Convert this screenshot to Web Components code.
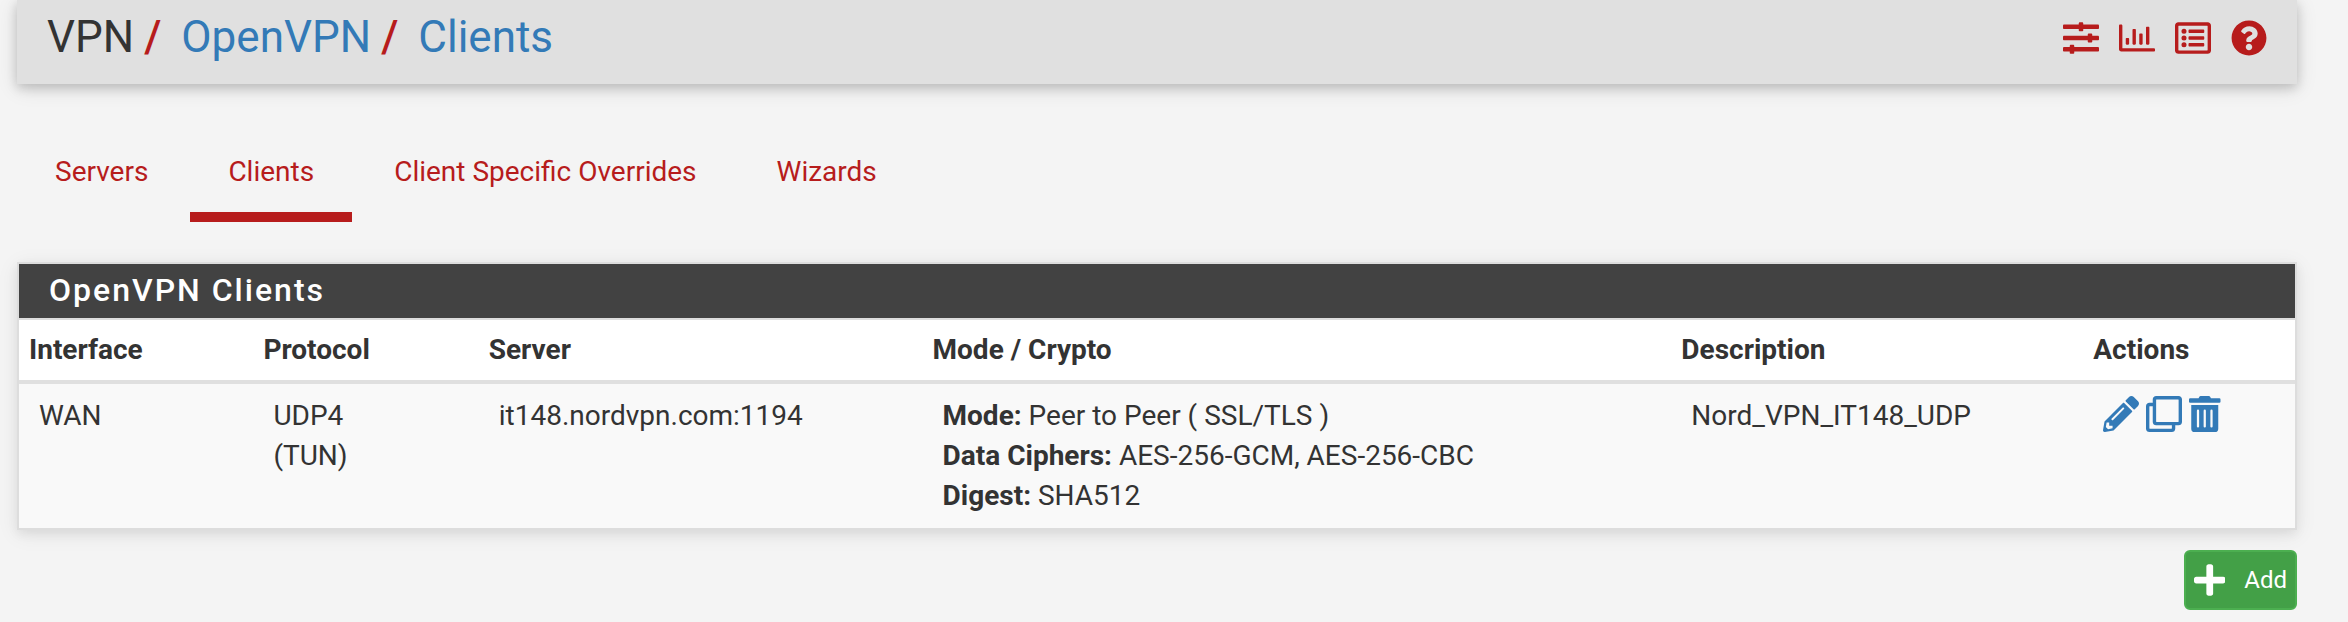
<!DOCTYPE html>
<html lang="en">
<head>
<meta charset="utf-8">
<meta name="viewport" content="width=device-width, initial-scale=1">
<title>VPN: OpenVPN: Clients</title>
<style>
    body {
        margin: 0;
        padding: 0 51px 8px 17px;
        background-color: #f4f4f4;
        color: #333;
        font-family: Roboto, "Liberation Sans", sans-serif;
        font-size: 28px;
        line-height: 40px;
        --red: #b71c1c;
        --blue: #337ab7;
        --line: #ddd;
    }
</style>
</head>
<body>
    <page-header>
        <bread-crumb>VPN</bread-crumb>
        <bread-crumb href="#openvpn">OpenVPN</bread-crumb>
        <bread-crumb href="#clients">Clients</bread-crumb>
        <icon-link slot="icons" icon="sliders" label="Related settings"></icon-link>
        <icon-link slot="icons" icon="chart" label="Related status"></icon-link>
        <icon-link slot="icons" icon="list" label="Related log entries"></icon-link>
        <icon-link slot="icons" icon="question" label="Help"></icon-link>
    </page-header>

    <tab-bar>
        <tab-item href="#servers">Servers</tab-item>
        <tab-item href="#clients" active>Clients</tab-item>
        <tab-item href="#csc">Client Specific Overrides</tab-item>
        <tab-item href="#wizards">Wizards</tab-item>
    </tab-bar>

    <data-panel heading="OpenVPN Clients">
        <client-table></client-table>
    </data-panel>

    <action-bar>
        <add-button>Add</add-button>
    </action-bar>

<script>
const ICONS = {
    sliders: [512, "M496 384H160v-16c0-8.8-7.2-16-16-16h-32c-8.8 0-16 7.2-16 16v16H16c-8.8 0-16 7.2-16 16v32c0 8.8 7.2 16 16 16h80v16c0 8.8 7.2 16 16 16h32c8.8 0 16-7.2 16-16v-16h336c8.8 0 16-7.2 16-16v-32c0-8.8-7.2-16-16-16zm0-160h-80v-16c0-8.8-7.2-16-16-16h-32c-8.8 0-16 7.2-16 16v16H16c-8.8 0-16 7.2-16 16v32c0 8.8 7.2 16 16 16h336v16c0 8.8 7.2 16 16 16h32c8.8 0 16-7.2 16-16v-16h80c8.8 0 16-7.2 16-16v-32c0-8.8-7.2-16-16-16zm0-160H288V48c0-8.8-7.2-16-16-16h-32c-8.8 0-16 7.2-16 16v16H16C7.2 64 0 71.2 0 80v32c0 8.8 7.2 16 16 16h208v16c0 8.8 7.2 16 16 16h32c8.8 0 16-7.2 16-16v-16h208c8.8 0 16-7.2 16-16V80c0-8.8-7.2-16-16-16z"],
    chart: [512, "M396.8 352h22.4c6.4 0 12.8-6.4 12.8-12.8V108.8c0-6.4-6.4-12.8-12.8-12.8h-22.4c-6.4 0-12.8 6.4-12.8 12.8v230.4c0 6.4 6.4 12.8 12.8 12.8zm-192 0h22.4c6.4 0 12.8-6.4 12.8-12.8V140.8c0-6.4-6.4-12.8-12.8-12.8h-22.4c-6.4 0-12.8 6.4-12.8 12.8v198.4c0 6.4 6.4 12.8 12.8 12.8zm96 0h22.4c6.4 0 12.8-6.4 12.8-12.8V204.8c0-6.4-6.4-12.8-12.8-12.8h-22.4c-6.4 0-12.8 6.4-12.8 12.8v134.4c0 6.4 6.4 12.8 12.8 12.8zM496 400H48V80c0-8.8-7.2-16-16-16H16C7.2 64 0 71.2 0 80v336c0 17.7 14.3 32 32 32h464c8.8 0 16-7.2 16-16v-16c0-8.8-7.2-16-16-16zm-387.2-48h22.4c6.4 0 12.8-6.4 12.8-12.8v-70.4c0-6.4-6.4-12.8-12.8-12.8h-22.4c-6.4 0-12.8 6.4-12.8 12.8v70.4c0 6.4 6.4 12.8 12.8 12.8z"],
    list: [512, "M464 32H48C21.5 32 0 53.5 0 80v352c0 26.5 21.5 48 48 48h416c26.5 0 48-21.5 48-48V80c0-26.5-21.5-48-48-48zm-6 400H54a6 6 0 0 1-6-6V86a6 6 0 0 1 6-6h404a6 6 0 0 1 6 6v340a6 6 0 0 1-6 6zM416 340v24a12 12 0 0 1-12 12H204a12 12 0 0 1-12-12v-24a12 12 0 0 1 12-12h200a12 12 0 0 1 12 12zM416 244v24a12 12 0 0 1-12 12H204a12 12 0 0 1-12-12v-24a12 12 0 0 1 12-12h200a12 12 0 0 1 12 12zM416 148v24a12 12 0 0 1-12 12H204a12 12 0 0 1-12-12v-24a12 12 0 0 1 12-12h200a12 12 0 0 1 12 12zM164 160a36 36 0 0 1-72 0a36 36 0 0 1 72 0zM164 256a36 36 0 0 1-72 0a36 36 0 0 1 72 0zM164 352a36 36 0 0 1-72 0a36 36 0 0 1 72 0z"],
    question: [512, "M504 256c0 137-111 248-248 248S8 393 8 256C8 119.1 119 8 256 8s248 111.1 248 248zM262.7 90c-54.5 0-89.3 23-116.6 63.8-3.5 5.3-2.4 12.4 2.7 16.2l34.7 26.3c5.2 4 12.6 3 16.7-2.1 17.9-22.7 30.1-35.8 57.3-35.8 20.4 0 45.7 13.1 45.7 33 0 15-12.4 22.7-32.5 34C247.1 238.5 216 254.9 216 296v4c0 6.6 5.4 12 12 12h56c6.6 0 12-5.4 12-12v-1.3c0-28.5 83.2-29.6 83.2-106.7 0-58-60.2-102-116.5-102zM256 338c-25.4 0-46 20.6-46 46s20.6 46 46 46 46-20.6 46-46-20.6-46-46-46z"],
    pencil: [512, "M497.9 142.1l-46.1 46.1c-4.7 4.7-12.3 4.7-17 0l-111-111c-4.7-4.7-4.7-12.3 0-17l46.1-46.1c18.7-18.7 49.1-18.7 67.9 0l60.1 60.1c18.8 18.7 18.8 49.1 0 67.9zM284.2 99.8L21.6 362.4.4 483.9c-2.9 16.4 11.4 30.6 27.8 27.8l121.5-21.3 262.6-262.6c4.7-4.7 4.7-12.3 0-17l-111-111c-4.8-4.7-12.4-4.7-17.1 0zM124.1 339.9c-5.5-5.5-5.5-14.3 0-19.8l154-154c5.5-5.5 14.3-5.5 19.8 0s5.5 14.3 0 19.8l-154 154c-5.5 5.5-14.3 5.5-19.8 0zM88 424h48v36.3l-64.5 11.3-31.1-31.1L51.7 376H88v48z"],
    clone: [512, "M464 0H144c-26.5 0-48 21.5-48 48v48H48c-26.5 0-48 21.5-48 48v320c0 26.5 21.5 48 48 48h320c26.5 0 48-21.5 48-48v-48h48c26.5 0 48-21.5 48-48V48c0-26.5-21.5-48-48-48zM362 464H54a6 6 0 0 1-6-6V150a6 6 0 0 1 6-6h42v224c0 26.5 21.5 48 48 48h224v42a6 6 0 0 1-6 6zm96-96H150a6 6 0 0 1-6-6V54a6 6 0 0 1 6-6h308a6 6 0 0 1 6 6v308a6 6 0 0 1-6 6z"],
    trash: [448, "M32 464a48 48 0 0 0 48 48h288a48 48 0 0 0 48-48V128H32zm272-256a16 16 0 0 1 32 0v224a16 16 0 0 1-32 0zm-96 0a16 16 0 0 1 32 0v224a16 16 0 0 1-32 0zm-96 0a16 16 0 0 1 32 0v224a16 16 0 0 1-32 0zM432 32H312l-9.4-18.7A24 24 0 0 0 281.1 0H166.8a23.7 23.7 0 0 0-21.4 13.3L136 32H16A16 16 0 0 0 0 48v32a16 16 0 0 0 16 16h416a16 16 0 0 0 16-16V48a16 16 0 0 0-16-16z"],
    plus: [448, "M416 208H272V64c0-17.7-14.3-32-32-32h-32c-17.7 0-32 14.3-32 32v144H32c-17.7 0-32 14.3-32 32v32c0 17.7 14.3 32 32 32h144v144c0 17.7 14.3 32 32 32h32c17.7 0 32-14.3 32-32V304h144c17.7 0 32-14.3 32-32v-32c0-17.7-14.3-32-32-32z"]
};

function iconSvg(name) {
    const [width, path] = ICONS[name];
    return `<svg viewBox="0 0 ${width} 512" height="36" aria-hidden="true"><path fill="currentColor" d="${path}"/></svg>`;
}

class IconLink extends HTMLElement {
    constructor() {
        super();
        this.attachShadow({mode: "open"});
    }

    connectedCallback() {
        this.shadowRoot.innerHTML = `
        <style>
            :host {
                display: block;
            }

            a {
                display: block;
                color: inherit;
            }

            svg {
                display: block;
            }
        </style>
        <a href="#${this.getAttribute("icon")}" aria-label="${this.getAttribute("label")}">${iconSvg(this.getAttribute("icon"))}</a>
        `;
    }
}

class BreadCrumb extends HTMLElement {
    constructor() {
        super();
        this.attachShadow({mode: "open"});
    }

    connectedCallback() {
        const href = this.getAttribute("href");
        this.shadowRoot.innerHTML = `
        <style>
            :host {
                display: flex;
            }

            .separator {
                margin: 0 20px 0 10px;
                color: var(--red);
                font-weight: 500;
            }

            a {
                color: var(--blue);
                text-decoration: none;
            }
        </style>
        ${href ? `<span class="separator">/</span><a href="${href}"><slot></slot></a>` : "<slot></slot>"}
        `;
    }
}

class PageHeader extends HTMLElement {
    constructor() {
        super();
        this.attachShadow({mode: "open"}).innerHTML = `
        <style>
            :host {
                display: block;
            }

            header {
                display: flex;
                justify-content: space-between;
                padding: 11px 30px 21px;
                background-color: #e0e0e0;
                box-shadow: 0 4px 10px rgba(0, 0, 0, 0.16), 0 4px 20px rgba(0, 0, 0, 0.12);
            }

            nav {
                display: flex;
                font-size: 44px;
                line-height: 52px;
            }

            .icons {
                display: flex;
                align-items: flex-start;
                gap: 20px;
                padding-top: 9px;
                color: var(--red);
            }
        </style>
        <header>
            <nav aria-label="Breadcrumb"><slot></slot></nav>
            <div class="icons"><slot name="icons"></slot></div>
        </header>
        `;
    }
}

class TabBar extends HTMLElement {
    constructor() {
        super();
        this.attachShadow({mode: "open"}).innerHTML = `
        <style>
            :host {
                display: block;
                margin: 48px 0 40px;
            }

            nav {
                display: flex;
                flex-wrap: wrap;
                gap: 4px;
            }
        </style>
        <nav aria-label="OpenVPN"><slot></slot></nav>
        `;
    }
}

class TabItem extends HTMLElement {
    constructor() {
        super();
        this.attachShadow({mode: "open"});
    }

    connectedCallback() {
        this.shadowRoot.innerHTML = `
        <style>
            :host {
                display: block;
            }

            a {
                display: block;
                padding: 20px 38px;
                border-bottom: 10px solid transparent;
                color: var(--red);
                text-decoration: none;
            }

            :host([active]) a {
                border-bottom-color: var(--red);
            }
        </style>
        <a href="${this.getAttribute("href")}"><slot></slot></a>
        `;
    }
}

class DataPanel extends HTMLElement {
    constructor() {
        super();
        this.attachShadow({mode: "open"});
    }

    connectedCallback() {
        this.shadowRoot.innerHTML = `
        <style>
            :host {
                display: block;
            }

            section {
                border: 2px solid var(--line);
                background-color: #fff;
                box-shadow: 0 4px 10px rgba(0, 0, 0, 0.06), 0 4px 20px rgba(0, 0, 0, 0.08);
            }

            h2 {
                margin: 0;
                padding: 6px 30px 8px;
                border-bottom: 2px solid var(--line);
                background-color: #424242;
                background-clip: padding-box;
                color: #fff;
                font-size: 32px;
                font-weight: 500;
                letter-spacing: 2px;
            }
        </style>
        <section>
            <h2>${this.getAttribute("heading")}</h2>
            <slot></slot>
        </section>
        `;
    }
}

class ClientTable extends HTMLElement {
    constructor() {
        super();
        this.attachShadow({mode: "open"}).innerHTML = `
        <style>
            :host {
                display: block;
            }

            table {
                width: 100%;
                table-layout: fixed;
                border-collapse: separate;
                border-spacing: 0;
            }

            th {
                padding: 10px;
                border-bottom: 4px solid #e0e0e0;
                text-align: left;
                font-weight: 700;
            }

            td {
                padding: 12px 20px;
                background-color: #f9f9f9;
                vertical-align: top;
            }

            .actions {
                display: flex;
                gap: 7px;
                color: var(--blue);
            }
        </style>
        <table>
            <colgroup>
                <col style="width: 10.3%">
                <col style="width: 9.9%">
                <col style="width: 19.5%">
                <col style="width: 32.9%">
                <col style="width: 18.1%">
                <col>
            </colgroup>
            <thead>
                <tr>
                    <th scope="col">Interface</th>
                    <th scope="col">Protocol</th>
                    <th scope="col">Server</th>
                    <th scope="col">Mode / Crypto</th>
                    <th scope="col">Description</th>
                    <th scope="col">Actions</th>
                </tr>
            </thead>
            <tbody>
                <tr>
                    <td>WAN</td>
                    <td>UDP4<br>(TUN)</td>
                    <td>it148.nordvpn.com:1194</td>
                    <td>
                        <b>Mode:</b> Peer to Peer ( SSL/TLS )<br>
                        <b>Data Ciphers:</b> AES-256-GCM, AES-256-CBC<br>
                        <b>Digest:</b> SHA512
                    </td>
                    <td>Nord_VPN_IT148_UDP</td>
                    <td>
                        <div class="actions">
                            <icon-link icon="pencil" label="Edit client"></icon-link>
                            <icon-link icon="clone" label="Copy client"></icon-link>
                            <icon-link icon="trash" label="Delete client"></icon-link>
                        </div>
                    </td>
                </tr>
            </tbody>
        </table>
        `;
    }
}

class ActionBar extends HTMLElement {
    constructor() {
        super();
        this.attachShadow({mode: "open"}).innerHTML = `
        <style>
            :host {
                display: flex;
                justify-content: flex-end;
                margin-top: 20px;
            }
        </style>
        <slot></slot>
        `;
    }
}

class AddButton extends HTMLElement {
    constructor() {
        super();
        this.attachShadow({mode: "open"}).innerHTML = `
        <style>
            :host {
                display: block;
            }

            button {
                display: flex;
                align-items: center;
                gap: 19px;
                padding: 10px 8px;
                border: 2px solid #4caf50;
                border-radius: 6px;
                background-color: #43a047;
                color: #fff;
                font: inherit;
                font-size: 24px;
                line-height: 36px;
                cursor: pointer;
            }
        </style>
        <button type="button">${iconSvg("plus")}<span><slot></slot></span></button>
        `;
    }
}

customElements.define("icon-link", IconLink);
customElements.define("bread-crumb", BreadCrumb);
customElements.define("page-header", PageHeader);
customElements.define("tab-bar", TabBar);
customElements.define("tab-item", TabItem);
customElements.define("data-panel", DataPanel);
customElements.define("client-table", ClientTable);
customElements.define("action-bar", ActionBar);
customElements.define("add-button", AddButton);
</script>
</body>
</html>
